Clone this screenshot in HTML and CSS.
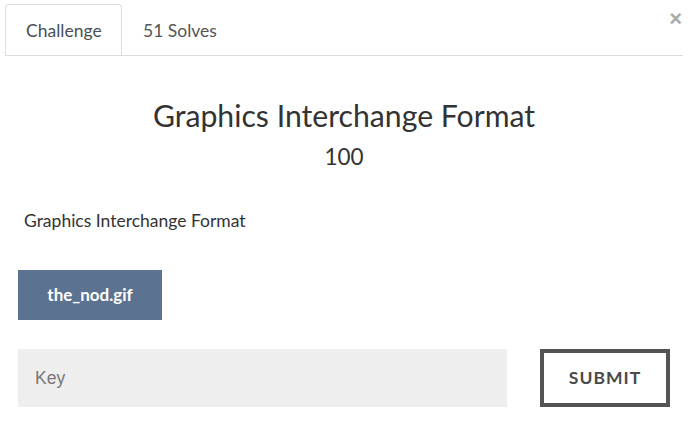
FILE: index.html
```html
<!DOCTYPE html>
<html>
<head>
<meta charset="utf-8">
<link rel="stylesheet" href="styles.css">
</head>
<body>
<div class="modal">
  <div class="tabs">
    <div class="tab active">Challenge</div>
    <div class="tab">51 Solves</div>
    <div class="close">&times;</div>
  </div>
  <div class="body">
    <h2 class="title">Graphics Interchange Format</h2>
    <div class="points">100</div>
    <div class="desc">Graphics Interchange Format</div>
    <div class="files"><span class="file">the_nod.gif</span></div>
    <div class="submit-row">
      <div class="key">Key</div>
      <div class="submit">SUBMIT</div>
    </div>
  </div>
</div>
</body>
</html>
```
FILE: styles.css
```css
html, body { margin: 0; padding: 0; background: #fff; }
body { font-family: Lato, "Open Sans", sans-serif; color: #333; }
.modal { margin-left: 5px; width: 678px; padding-top: 4px; }
.tabs { display: flex; border-bottom: 1px solid #ddd; height: 51px; position: relative; }
.tab { font-size: 17.5px; line-height: 52px; padding: 0 20px; color: #555; border: 1px solid transparent; border-bottom: none; border-radius: 4px 4px 0 0; }
.tab.active { border-color: #ddd; background: #fff; height: 51px; box-sizing: border-box; margin-bottom: -1px; color: #495057; padding: 0 0 0 20px; width: 117px; }
.tab:nth-child(2) { padding-left: 20px; }
.close { position: absolute; right: 1px; top: 3px; font-size: 22px; line-height: 24px; color: #aaa; font-weight: 700; font-family: "Liberation Sans", Arial, sans-serif; }
.body { padding: 0 13px; }
.title { margin: 41px 0 0; font-size: 30.2px; font-weight: 400; text-align: center; line-height: 36px; color: #333; }
.points { text-align: center; font-size: 22.5px; line-height: 28px; margin-top: 10px; }
.desc { margin: 39px 0 0 6px; font-size: 17.5px; line-height: 22px; }
.files { margin-top: 38px; display: flex; }
.file { display: inline-block; width: 144px; height: 50px; line-height: 50px; text-align: center; background: #5b7290; color: #fff; font-weight: 700; font-size: 17px; }
.submit-row { display: flex; margin-top: 29px; gap: 33px; }
.key { width: 489px; height: 58px; box-sizing: border-box; background: #eee; padding-left: 17px; line-height: 58px; font-family: "Liberation Sans", Arial, sans-serif; font-size: 17.5px; color: #777; }
.submit { width: 130px; height: 58px; box-sizing: border-box; border: 4px solid #545454; text-align: center; line-height: 50px; font-weight: 700; font-size: 17.5px; letter-spacing: 1px; color: #4a4a4a; }
```
